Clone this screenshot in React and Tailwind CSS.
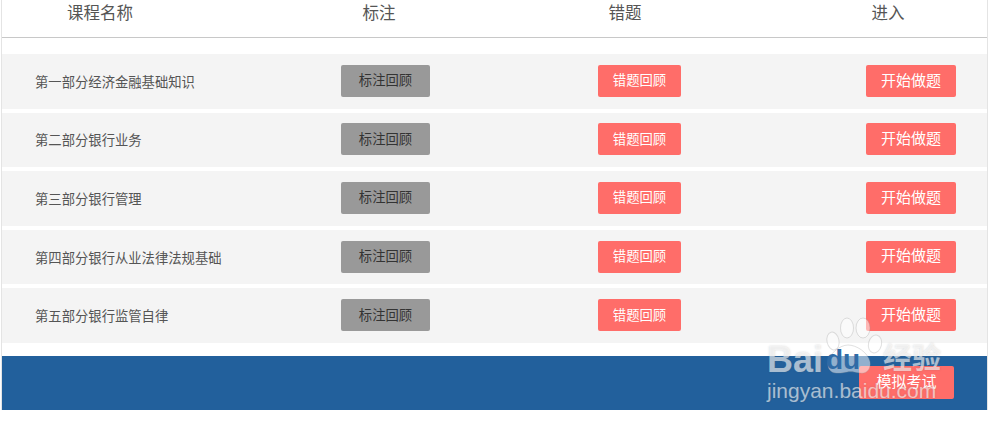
const rows = [
  '第一部分经济金融基础知识',
  '第二部分银行业务',
  '第三部分银行管理',
  '第四部分银行从业法律法规基础',
  '第五部分银行监管自律',
];

const font = { fontFamily: '"Liberation Sans", "Noto Sans CJK SC", sans-serif' };

function Watermark() {
  return (
    <div className="absolute left-[766px] top-[316px] w-[190px] h-[90px] text-white/60 pointer-events-none [text-shadow:0_0_2px_rgba(90,90,90,0.25)]">
      <svg className="absolute left-[56px] top-0" width="64" height="60" viewBox="0 0 64 60" fill="#fff" fillOpacity="0.5" stroke="#999" strokeOpacity="0.3">
        <ellipse cx="11" cy="25" rx="6" ry="9" transform="rotate(-12 11 25)" />
        <ellipse cx="25" cy="12" rx="6.5" ry="10" />
        <ellipse cx="41" cy="12" rx="7" ry="10" />
        <ellipse cx="53" cy="28" rx="6.5" ry="9" transform="rotate(14 53 28)" />
        <path d="M6 48c0-10 12-19 20-19s20 7 22 17c1 8-4 12-10 11-6-1-9-2-13-1-6 1-19 4-19-8z" />
      </svg>
      <div className="absolute left-[1px] top-[23px] text-[36px] leading-[42px] font-bold">Bai</div>
      <div className="absolute left-[60px] top-[28px] text-[28px] leading-[32px] font-bold text-[#2f6ba6] [text-shadow:none]">du</div>
      <div className="absolute left-[117px] top-[24px] text-[29px] leading-[38px] font-bold">经验</div>
      <div className="absolute left-[1px] top-[62px] text-[21px] leading-[26px]">jingyan.baidu.com</div>
    </div>
  );
}

export default function App() {
  return (
    <div style={font} className="w-[1000px] h-[424px] relative bg-white overflow-hidden">
      <div className="ml-[1px] w-[987px] h-[410px] border-x border-[#e4e4e4] flex flex-col">
        <div className="flex h-[38px] border-b border-[#c8c8c8] text-[16.5px] text-[#555555] leading-[26px]">
          <div className="w-[196px] text-center">课程名称</div>
          <div className="w-[360px] pl-[2px] text-center">标注</div>
          <div className="w-[130px] pl-[4px] text-center">错题</div>
          <div className="flex-1 pl-[101px] text-center">进入</div>
        </div>
        <div className="mt-[16px] flex flex-col gap-[4px]">
          {rows.map((name) => (
            <div key={name} className="flex items-center h-[54.6px] bg-[#f4f4f4] text-[13.33px]">
              <div className="w-[339px] pl-[33px] pt-[3px] text-[#555555]">{name}</div>
              <button className="w-[89px] h-[32px] mt-[-1px] pt-[1px] rounded-[2px] bg-[#999999] text-[#333333]">标注回顾</button>
              <button className="w-[83px] h-[32px] mt-[-1px] pt-[1px] ml-[168px] rounded-[2px] bg-[#ff6d69] text-white">错题回顾</button>
              <button className="w-[90px] h-[32px] mt-[-1px] ml-[185px] rounded-[2px] bg-[#ff6d69] text-white text-[15px]">开始做题</button>
            </div>
          ))}
        </div>
        <div className="mt-[13px] flex-1 bg-[#22609c] flex justify-end items-start pt-[10px] pr-[33px]">
          <button className="w-[95px] h-[33px] rounded-[2px] bg-[#ff6d69] text-white text-[15px]">模拟考试</button>
        </div>
      </div>
      <Watermark />
    </div>
  );
}
